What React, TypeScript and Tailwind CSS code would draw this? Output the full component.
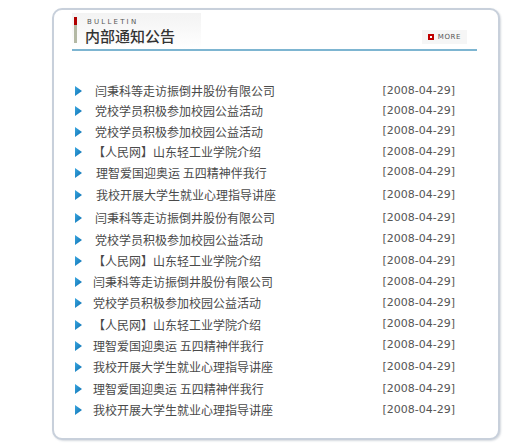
import React from 'react';

const ROWS = [
  { title: '闫秉科等走访振倒井股份有限公司', h: 'h-[20px]', pad: 'pl-[2px]' },
  { title: '党校学员积极参加校园公益活动', h: 'h-[20px]', pad: 'pl-[2px]' },
  { title: '党校学员积极参加校园公益活动', h: 'h-[21px]', pad: 'pl-[2px]' },
  { title: '【人民网】山东轻工业学院介绍', h: 'h-[20px]', pad: 'pl-0' },
  { title: '理智爱国迎奥运 五四精神伴我行', h: 'h-[21px]', pad: 'pl-[3px]' },
  { title: '我校开展大学生就业心理指导讲座', h: 'h-[24px]', pad: 'pl-[3px]' },
  { title: '闫秉科等走访振倒井股份有限公司', h: 'h-[22px]', pad: 'pl-[2px]' },
  { title: '党校学员积极参加校园公益活动', h: 'h-[21px]', pad: 'pl-[2px]' },
  { title: '【人民网】山东轻工业学院介绍', h: 'h-[22px]', pad: 'pl-0' },
  { title: '闫秉科等走访振倒井股份有限公司', h: 'h-[20px]', pad: 'pl-0' },
  { title: '党校学员积极参加校园公益活动', h: 'h-[22px]', pad: 'pl-0' },
  { title: '【人民网】山东轻工业学院介绍', h: 'h-[21px]', pad: 'pl-0' },
  { title: '理智爱国迎奥运 五四精神伴我行', h: 'h-[21px]', pad: 'pl-0' },
  { title: '我校开展大学生就业心理指导讲座', h: 'h-[22px]', pad: 'pl-0' },
  { title: '理智爱国迎奥运 五四精神伴我行', h: 'h-[22px]', pad: 'pl-0' },
  { title: '我校开展大学生就业心理指导讲座', h: 'h-[20px]', pad: 'pl-0' },
];

function Arrow() {
  return (
    <svg width="7" height="10" viewBox="0 0 7 10" className="shrink-0">
      <defs>
        <linearGradient id="ag" x1="0" y1="0" x2="1" y2="1">
          <stop offset="0" stopColor="#3aa6e0" />
          <stop offset="1" stopColor="#0b6fb0" />
        </linearGradient>
      </defs>
      <polygon points="0,0 7,5 0,10" fill="url(#ag)" />
    </svg>
  );
}

export default function App() {
  return (
    <div className="w-[506px] h-[446px] bg-white pt-[8px] pl-[52px]" style={{ fontFamily: '"Noto Sans CJK SC", "Noto Sans", sans-serif' }}>
      <div className="w-[448px] h-[432px] border-2 border-[#c8d0db] rounded-[10px] bg-white shadow-[1px_1px_2px_rgba(150,160,175,0.4)] pl-[18px] pr-[21px]">
        {/* Header */}
        <div className="h-[35px] mt-[6px] flex items-end justify-between border-b-2 border-[#7db5d1]">
          <div className="flex items-stretch pl-[2px] pt-[4px] pb-[5px] bg-gradient-to-b from-[#f3f3f3] to-white">
            <div className="flex flex-col w-[3px] mr-[9px]">
              <div className="h-[8px] bg-[#b00000]" />
              <div className="h-[18px] bg-[#b4b9a5]" />
            </div>
            <div className="flex flex-col pr-[26px]">
              <span className="text-[7px] leading-[8px] tracking-[2.2px] text-[#555] pl-[1px] mt-[1px]" style={{ fontFamily: '"DejaVu Sans", sans-serif' }}>BULLETIN</span>
              <span className="text-[15px] leading-[16px] mt-[2px] font-medium text-[#333] -ml-[1px]">内部通知公告</span>
            </div>
          </div>
          <div className="flex items-center gap-[4px] h-[14px] mb-[5px] px-[6px] bg-[#f6f6f6] mr-[10px]">
            <div className="w-[6px] h-[6px] bg-[#c00000] flex items-center justify-center">
              <div className="w-[2px] h-[2px] bg-white" />
            </div>
            <span className="text-[7px] leading-none tracking-[0.6px] text-[#555]" style={{ fontFamily: '"DejaVu Sans", sans-serif' }}>MORE</span>
          </div>
        </div>

        {/* List */}
        <div className="mt-[30px] flex flex-col">
          {ROWS.map((r, i) => (
            <div key={i} className={`flex items-center ${r.h}`}>
              <div className="w-[21px] pl-[3px] flex items-center">
                <Arrow />
              </div>
              <span className={`flex-1 text-[12px] text-[#4a4a4a] whitespace-nowrap ${r.pad}`}>{r.title}</span>
              <span className="text-[11px] text-[#555] pr-[22px]" style={{ fontFamily: '"DejaVu Sans", Tahoma, sans-serif' }}>[2008-04-29]</span>
            </div>
          ))}
        </div>
      </div>
    </div>
  );
}
